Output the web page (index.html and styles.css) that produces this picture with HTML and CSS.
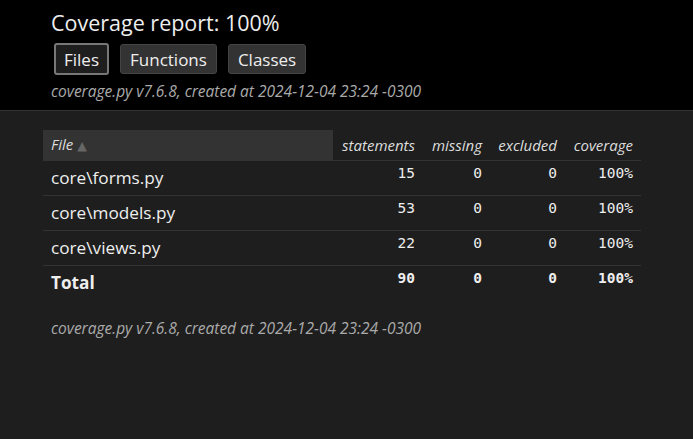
FILE: index.html
```html
<!DOCTYPE html>
<html lang="en">
<head>
<meta charset="utf-8">
<title>Coverage report</title>
<link rel="stylesheet" href="styles.css">
</head>
<body>
<header class="header">
  <div class="content">
    <h1 class="title">Coverage report: <span class="pc-cov">100%</span></h1>
    <h2 class="tabs">
      <a class="button current">Files</a>
      <a class="button">Functions</a>
      <a class="button">Classes</a>
    </h2>
    <p class="text">coverage.py v7.6.8, created at 2024-12-04 23:24 -0300</p>
  </div>
</header>
<main class="index">
  <table class="index-table">
    <colgroup>
      <col class="c-name"><col class="c-stmt"><col class="c-miss"><col class="c-excl"><col class="c-cov">
    </colgroup>
    <thead>
      <tr>
        <th class="name sorted">File<span class="arrows"> ▲</span></th>
        <th>statements</th>
        <th>missing</th>
        <th>excluded</th>
        <th>coverage</th>
      </tr>
    </thead>
    <tbody>
      <tr class="region">
        <td class="name">core\forms.py</td><td>15</td><td>0</td><td>0</td><td>100%</td>
      </tr>
      <tr class="region">
        <td class="name">core\models.py</td><td>53</td><td>0</td><td>0</td><td>100%</td>
      </tr>
      <tr class="region">
        <td class="name">core\views.py</td><td>22</td><td>0</td><td>0</td><td>100%</td>
      </tr>
    </tbody>
    <tfoot>
      <tr class="total">
        <td class="name">Total</td><td>90</td><td>0</td><td>0</td><td>100%</td>
      </tr>
    </tfoot>
  </table>
  <p class="foot">coverage.py v7.6.8, created at 2024-12-04 23:24 -0300</p>
</main>
</body>
</html>
```

FILE: styles.css
```css
html, body { margin: 0; padding: 0; }
body {
  background: #1e1e1e;
  color: #eee;
  font-family: "Open Sans", "Noto Sans", sans-serif;
  font-size: 16px;
}
.header {
  background: #000;
  border-bottom: 1px solid #333;
}
.header .content {
  padding: 9px 0 9px 51px;
}
.title {
  margin: 0;
  font-size: 21.5px;
  line-height: 28px;
  font-weight: 400;
}
.tabs {
  margin: 6px 0 0 3px;
  display: flex;
  align-items: center;
  gap: 11px;
  font-size: 17px;
  font-weight: 400;
  height: 32px;
}
.button {
  display: flex;
  align-items: center;
  height: 28px;
  padding: 0 9px;
  border: 1px solid #444;
  border-radius: 3px;
  background: #333;
  color: #eee;
  cursor: pointer;
}
.button.current {
  border: 2px solid #777;
  background: #1e1e1e;
  padding: 0 8px;
}
.text {
  margin: 6px 0 0;
  font-size: 15.5px;
  line-height: 20px;
  font-style: italic;
  color: #aaa;
}
.index {
  padding: 19px 0 0 43px;
}
.index-table {
  border-collapse: collapse;
  table-layout: fixed;
  width: 598px;
  font-family: "DejaVu Sans Mono", monospace;
  font-size: 14.5px;
}
.c-name { width: 290px; }
.c-stmt { width: 90px; }
.c-miss { width: 67px; }
.c-excl { width: 75px; }
.c-cov { width: 76px; }
.index-table th {
  font-family: "Open Sans", "Noto Sans", sans-serif;
  font-style: italic;
  font-weight: 400;
  font-size: 15px;
  color: #ddd;
  text-align: right;
  height: 28px;
  line-height: 28px;
  padding: 0 8px;
  border-bottom: 1px solid #333;
  white-space: nowrap;
}
.index-table th.name {
  text-align: left;
  background: #333;
}
.arrows {
  color: #666;
  font-family: "DejaVu Sans", sans-serif;
  font-style: normal;
  font-size: 12.5px;
}
.index-table td {
  text-align: right;
  vertical-align: top;
  height: 34px;
  box-sizing: border-box;
  padding: 2px 8px 0;
  line-height: 20px;
  border-bottom: 1px solid #333;
}
.index-table td.name {
  text-align: left;
  font-family: "Open Sans", "Noto Sans", sans-serif;
  font-size: 17.2px;
  line-height: 34px;
  padding: 0 8px;
}
.index-table tr.total td {
  font-weight: bold;
  border-bottom: none;
}
.foot {
  margin: 18px 0 0 8px;
  font-size: 15.5px;
  line-height: 20px;
  font-style: italic;
  color: #aaa;
}
```
